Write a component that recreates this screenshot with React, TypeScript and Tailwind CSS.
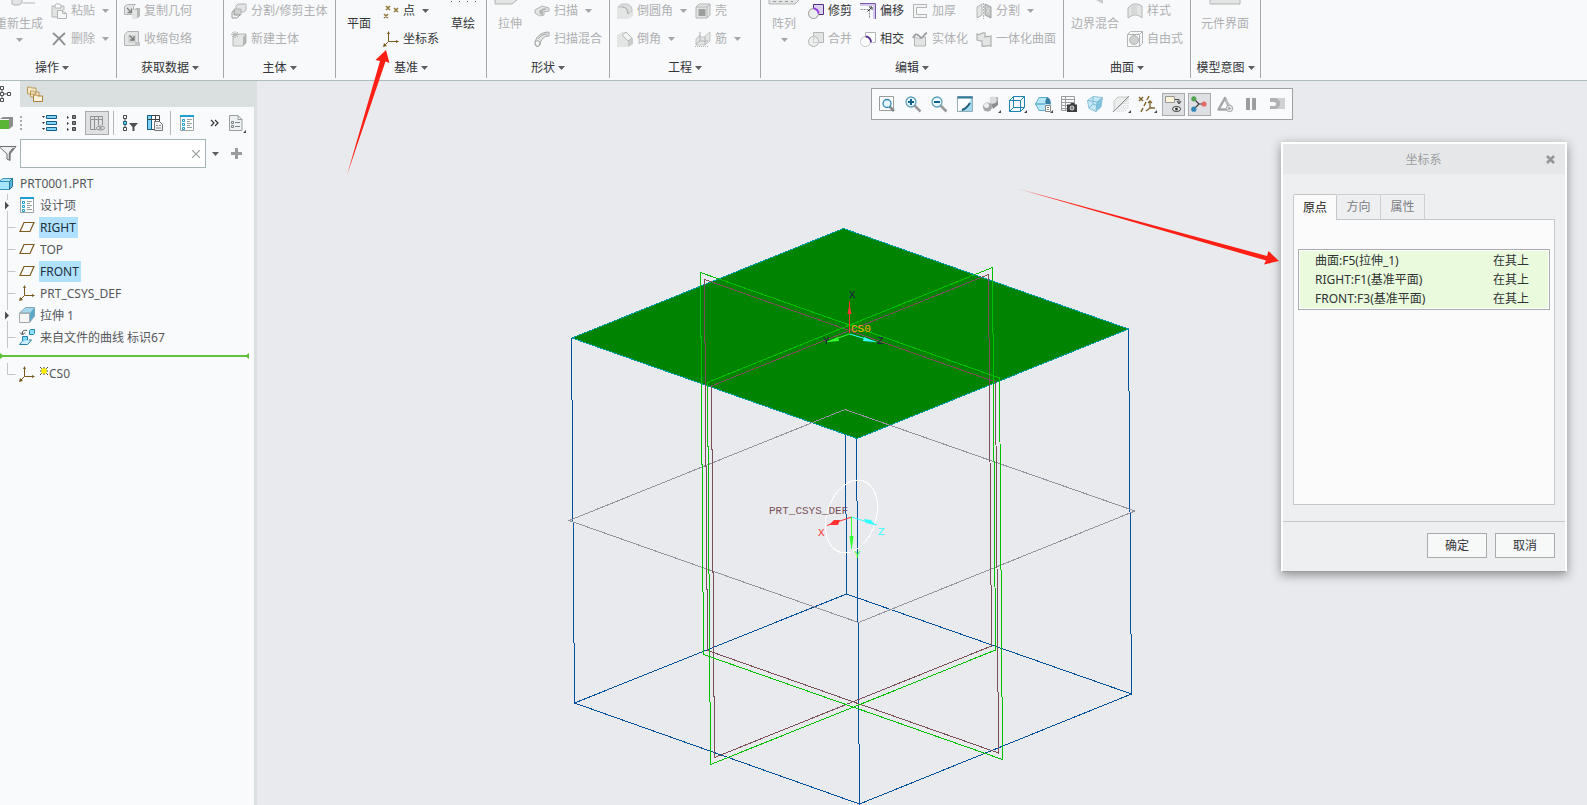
import type { ReactNode } from 'react';
import clsx from 'clsx';

const FONT = "font-['Noto_Sans','Noto_Sans_CJK_SC',sans-serif]";

const Icon = ({ children, className }: { children: ReactNode; className?: string }) => (
  <svg viewBox="0 0 16 16" className={clsx('h-4 w-4 shrink-0', className)} fill="none" aria-hidden="true">
    {children}
  </svg>
);

const Caret = ({ className = 'text-[#5c5f62]' }: { className?: string }) => (
  <svg viewBox="0 0 7 4" className={clsx('h-1 w-[7px] shrink-0', className)} aria-hidden="true">
    <path d="M0 0h7L3.5 4z" fill="currentColor" />
  </svg>
);

/* ---------- ribbon icons ---------- */

const G = '#b3b5b5';
const L = '#e3e5e5';

const ribbonIcons: Record<string, ReactNode> = {
  paste: (
    <>
      <path d="M6 14H1V3h12v4" stroke={G} fill={L} />
      <path d="M4 3l1-2h4l1 2v2H4z" fill="#fff" stroke={G} />
      <path d="M6.5 7.500h5l4 3v5h-9z" fill="#f6f7f7" stroke={G} />
      <path d="M11.500 7.500v3h4" stroke={G} />
    </>
  ),
  remove: <path d="M2 2c4 3 8 7 12 12M14 2C9 6 6 9 2 14" stroke="#8f9191" strokeWidth="2" />,
  copyGeom: (
    <>
      <path d="M.5 3.500l3-2h8l-2 2v8h-9z" fill={L} stroke={G} />
      <path d="M10 7l2-2h4v8l-2 2h-4z" fill="#b5b7b7" />
      <path d="M8 7h5v9H8z" fill={L} />
      <path d="M3 5l4 4M7.500 5.500v4h-4" stroke="#808282" strokeWidth="1.300" />
    </>
  ),
  shrink: (
    <>
      <path d="M.5 3.500l3-3h11v11l-3 3H.5z" fill={L} stroke={G} />
      <path d="M4 4h8v8H4z" fill="#d2d4d4" />
      <path d="M5.500 4.500l4 4M10 5v4H6" stroke="#777" strokeWidth="1.300" />
      <path d="M11 11h5v4h-5z" fill="#c3c5c5" />
    </>
  ),
  splitBody: (
    <>
      <path d="M5 3l2-2h8v6l-2 2H5z" fill={L} stroke={G} />
      <path d="M3 6h7v6H3z" fill="#d0d2d2" stroke={G} />
      <path d="M1 9l2-2v5h6l-3 3H1z" fill="#f0f1f1" stroke="#9b9d9d" />
    </>
  ),
  newBody: (
    <>
      <path d="M2 6l3-3h10v9l-3 3H2z" fill={L} stroke={G} />
      <path d="M12 6v9l3-3V3z" fill={G} />
      <path d="M4 0v7M0 3.500h8M1 1l6 5M7 1L1 6" stroke={G} />
    </>
  ),
  points: (
    <path
      d="M3 3l4 4M7 3L3 7M11 5l4 4M15 5l-4 4M1 11l4 4M5 11l-4 4"
      stroke="#927434"
      strokeWidth="1.500"
    />
  ),
  csys: (
    <>
      <path d="M5.500 2v8.500H15M5.500 10.500L1 15" stroke="#7c5a20" />
      <path d="M5.500 0l1.500 3H4zM16 10.500L13 9v3zM0 16l1-4 3 3z" fill="#7c5a20" />
    </>
  ),
  sweep: (
    <>
      <path d="M1 7l7-4 7 2v3l-5 1v3l-4 1-5-3z" fill={L} stroke={G} />
      <path d="M5 8l5-3 3 1-4 2v4l-3-1z" fill={G} />
    </>
  ),
  sweepBlend: (
    <>
      <path d="M1 13C1 6 7 1 15 1v4c-5 0-8 3-9 9-1 2-5 2-5-1z" fill={L} stroke="#a5a7a7" />
      <ellipse cx="3.500" cy="12.500" rx="2.300" ry="2.800" fill="#f5f5f5" stroke="#a5a7a7" />
      <path d="M4 8c2-3 5-5 9-5" stroke="#a5a7a7" />
    </>
  ),
  round: (
    <>
      <path d="M0 4l5-3h4c4 0 7 4 7 8v4l-5 3H0z" fill={L} />
      <path d="M1 4h4c4 0 6 3 6 7l4-3c0-4-2-7-6-7H5z" fill="#dcdede" stroke="#c3c5c5" />
      <path d="M5 4c4 0 6 3 6 7" stroke="#a9abab" />
    </>
  ),
  chamfer: (
    <>
      <path d="M0 4l5-3h4l7 7v5l-5 3H0z" fill={L} />
      <path d="M5 4l6 6 4-3-6-6z" fill="#f1f2f2" stroke="#b5b7b7" />
      <path d="M11 10v6l5-3V7z" fill="#c9cbcb" />
    </>
  ),
  shell: (
    <>
      <path d="M1 4l3-3h11v11l-3 3H1z" fill={L} stroke={G} />
      <path d="M3.500 6h7v7h-7z" fill="#9c9e9e" />
      <path d="M12 4v11M1 4h11l3-3" stroke={G} />
    </>
  ),
  rib: (
    <>
      <path d="M5 4l-4 4v6h9l5-4V1l-5 4v1H5z" fill={L} stroke="#c3c5c5" />
      <path d="M5 1v9l-4 3M5 10h8M10 6v8" stroke={G} />
      <path d="M0 15.500h13" stroke={G} strokeDasharray="1 1" />
    </>
  ),
  trim: (
    <>
      <path d="M5.500 1.500h10v10h-10z" fill="#ddd3ee" stroke="#54308a" />
      <circle cx="5.500" cy="10.500" r="5" fill="#eceded" stroke="#999" />
      <path d="M5.500 5.500a5 5 0 015 5" stroke="#9a3fe0" strokeWidth="2" />
    </>
  ),
  merge: (
    <>
      <path d="M5.500 1.500h10v10h-10z" fill={L} stroke={G} />
      <circle cx="5.500" cy="10.500" r="5" fill="#eceded" stroke={G} />
      <path d="M5.500 5.500v6h5" stroke="#cfd1d1" />
    </>
  ),
  offset: (
    <>
      <path d="M0 0h16v16h-3V3H0z" fill="#d6c8ea" />
      <path d="M0 .5h15.500V16" stroke="#7a5aa8" />
      <path d="M.5 6.500h9v9" stroke="#888" strokeDasharray="2 1" />
      <path d="M7.500 8.500l4-4M9 4h3v3" stroke="#333" />
    </>
  ),
  intersect: (
    <>
      <path d="M5.500 4.500v-3h10v10h-3" stroke={G} fill="#fff" />
      <circle cx="5.500" cy="10.500" r="5" fill="#fff" stroke="#c3c5c5" />
      <path d="M5.500 5.500a5.500 5.500 0 015.500 6" stroke="#54308a" strokeWidth="1.800" />
    </>
  ),
  thicken: <path d="M1.500 1.500h13v3h-10v7h10v3h-13z" stroke={G} fill="#f3f4f4" />,
  solidify: (
    <>
      <path d="M2.500 6v9h11V6c-3-2-5 4-8 1z" fill={L} stroke={G} />
      <path d="M1 7c3-6 5-3 7-1 3 3 4-4 7-4" stroke="#9c9e9e" strokeWidth="1.800" />
    </>
  ),
  divide: (
    <>
      <path d="M1 4l5-3v11l-5 3z" fill={L} stroke={G} />
      <path d="M9 1l6 3v11l-6-3z" fill="#c3c5c5" stroke="#9fa1a1" />
      <path d="M10 3l4 9M14 5l-4 6" stroke="#eee" strokeDasharray="1 1" />
      <path d="M7.500 0v16" stroke={G} strokeDasharray="2 1" />
    </>
  ),
  quilt: (
    <path d="M1 3c3 2 4-2 8-1v4c2-1 4 0 6-1v10c-3-1-5 1-9 0v-5c-2 0-3 0-5-1z" fill={L} stroke={G} strokeWidth="1.300" />
  ),
  style: (
    <>
      <path d="M1 5c4-5 9-5 14-2v12c-4-4-9-4-14 0z" fill={L} stroke={G} />
      <path d="M4 3v9l6-1V2z" fill="#d6d8d8" />
    </>
  ),
  freestyle: (
    <>
      <path d="M.5 3.500l3-3h12v12l-3 3H.5zM.5 3.500h12v12M12.500 3.500l3-3" stroke={G} />
      <circle cx="7" cy="9" r="4.500" fill="#cfd1d1" stroke={G} />
    </>
  ),
};

interface Tool {
  label: string;
  icon: string;
  caret?: boolean;
  on?: boolean;
}

const ToolColumn = ({ items }: { items: Tool[] }) => (
  <div className="flex shrink-0 flex-col items-start gap-[7px]">
    {items.map((t) => (
      <button
        key={t.label}
        type="button"
        className={clsx(
          'flex h-[21px] items-center gap-1 whitespace-nowrap',
          t.on ? 'text-[#333538]' : 'text-[#aeb0b1]',
        )}
      >
        <Icon>{ribbonIcons[t.icon]}</Icon>
        <span>{t.label}</span>
        {t.caret && <Caret className={clsx('ml-[3px]', t.on ? 'text-[#5c5f62]' : 'text-[#a3a5a6]')} />}
      </button>
    ))}
  </div>
);

const BigTool = ({ label, caret, on, stub }: { label: string; caret?: boolean; on?: boolean; stub?: ReactNode }) => (
  <button
    type="button"
    className={clsx('flex shrink-0 flex-col items-center whitespace-nowrap', on ? 'text-[#333538]' : 'text-[#aeb0b1]')}
  >
    <svg viewBox="0 0 32 6" className="h-[6px] w-8" fill="none" aria-hidden="true">
      {stub}
    </svg>
    <span className="mt-[10px] leading-4">{label}</span>
    {caret && <Caret className="mt-[6px] text-[#a3a5a6]" />}
  </button>
);

const Group = ({ title, className, children }: { title: string; className: string; children: ReactNode }) => (
  <section className={clsx('flex h-[78px] shrink-0 flex-col justify-between border-r border-[#a3a8ab]', className)}>
    <div className="flex items-start pl-[7px]">{children}</div>
    <button type="button" className="flex h-[21px] items-center justify-center gap-[3px] self-center whitespace-nowrap text-[#333538]">
      {title}
      <Caret />
    </button>
  </section>
);

const Ribbon = () => (
  <header className="flex h-[81px] shrink-0 overflow-hidden border-b border-[#aebcbd] bg-[#f8f9fb]">
    <Group title="操作" className="-ml-3 w-[129px]">
      <BigTool
        label="重新生成"
        caret
        stub={<><path d="M9 0v4l2 1h5l3-2V0" stroke={G} fill={L} /><path d="M20 3h17" stroke={G} /></>}
      />
      <div className="ml-2">
        <ToolColumn items={[{ label: '粘贴', icon: 'paste', caret: true }, { label: '删除', icon: 'remove', caret: true }]} />
      </div>
    </Group>
    <Group title="获取数据" className="w-[107px]">
      <ToolColumn items={[{ label: '复制几何', icon: 'copyGeom' }, { label: '收缩包络', icon: 'shrink' }]} />
    </Group>
    <Group title="主体" className="w-[112px]">
      <ToolColumn items={[{ label: '分割/修剪主体', icon: 'splitBody' }, { label: '新建主体', icon: 'newBody' }]} />
    </Group>
    <Group title="基准" className="w-[151px]">
      <BigTool label="平面" on />
      <div className="ml-2 w-16">
        <ToolColumn items={[{ label: '点', icon: 'points', caret: true, on: true }, { label: '坐标系', icon: 'csys', on: true }]} />
      </div>
      <BigTool label="草绘" on stub={<path d="M4 1.500h28" stroke="#555" strokeDasharray="1 7" />} />
    </Group>
    <Group title="形状" className="w-[123px]">
      <BigTool label="拉伸" stub={<path d="M1 0v4h17l5-4" stroke={G} fill={L} />} />
      <div className="ml-2">
        <ToolColumn items={[{ label: '扫描', icon: 'sweep', caret: true }, { label: '扫描混合', icon: 'sweepBlend' }]} />
      </div>
    </Group>
    <Group title="工程" className="w-[151px]">
      <ToolColumn items={[{ label: '倒圆角', icon: 'round', caret: true }, { label: '倒角', icon: 'chamfer', caret: true }]} />
      <div className="ml-2">
        <ToolColumn items={[{ label: '壳', icon: 'shell' }, { label: '筋', icon: 'rib', caret: true }]} />
      </div>
    </Group>
    <Group title="编辑" className="w-[303px]">
      <BigTool
        label="阵列"
        caret
        stub={<><path d="M1 0v4h26l4-4" stroke={G} fill={L} /><path d="M5 1.500h20" stroke="#999" strokeDasharray="3 3" /></>}
      />
      <div className="ml-2 flex gap-2">
        <ToolColumn items={[{ label: '修剪', icon: 'trim', on: true }, { label: '合并', icon: 'merge' }]} />
        <ToolColumn items={[{ label: '偏移', icon: 'offset', on: true }, { label: '相交', icon: 'intersect', on: true }]} />
        <ToolColumn items={[{ label: '加厚', icon: 'thicken' }, { label: '实体化', icon: 'solidify' }]} />
        <ToolColumn items={[{ label: '分割', icon: 'divide', caret: true }, { label: '一体化曲面', icon: 'quilt' }]} />
      </div>
    </Group>
    <Group title="曲面" className="w-[127px]">
      <BigTool label="边界混合" stub={<path d="M17 0l7 4V0z" fill="#c9cbcb" />} />
      <div className="ml-2">
        <ToolColumn items={[{ label: '样式', icon: 'style' }, { label: '自由式', icon: 'freestyle' }]} />
      </div>
    </Group>
    <Group title="模型意图" className="w-[70px]">
      <div className="ml-[3px]">
        <BigTool label="元件界面" stub={<path d="M1 0v4h30V0" stroke={G} fill={L} />} />
      </div>
    </Group>
  </header>
);

/* ---------- model tree panel ---------- */

const ListGlyph = () => (
  <>
    <path d="M1.500.5h13v15h-13z" fill="#fff" stroke="#9aa5aa" />
    <path d="M1 1h14" stroke="#1f9ed1" strokeWidth="2" />
    <path d="M3.500 4.500h2v2h-2zM3.500 8.500h2v2h-2zM3.500 12.500h2v2h-2z" stroke="#1f9ed1" />
    <path d="M8 4.500h5M8 6.500h3M8 8.500h5M8 10.500h3M8 12.500h5" stroke="#9a9fa2" />
  </>
);

const PlaneGlyph = () => <path d="M5 3.500h10l-4 9H1z" stroke="#7c5a20" strokeWidth="1.200" />;

const CsysGlyph = () => <>{ribbonIcons.csys}</>;

const ExtrudeGlyph = () => (
  <>
    <path d="M.5 6l6-5.500h9V9L11 15V6z" fill="#a5d8ec" stroke="#8aa5b0" />
    <path d="M11 6l4.500-5.500V9L11 14z" fill="#5ba9c9" />
    <path d="M.5 6.500h10v9H.5z" fill="#f7f5f5" stroke="#a5a9ac" />
  </>
);

const CurveFileGlyph = () => (
  <>
    <path d="M10.500 1.500l1-1h4v4l-1 1h-4z" fill="#8fe0fa" stroke="#2482a8" />
    <path d="M8 1.500C4 1 3 2 3.500 5M1 3.500L3.500 6 6 3.500" stroke="#444" />
    <path d="M3.500 7.500h5v5h-5z" fill="#7ed8f8" stroke="#2482a8" />
    <path d="M3 12.500l-2.500 3h8l4-4.500H10" fill="#cdefff" stroke="#2482a8" />
  </>
);

const nodes = [
  { label: '设计项', icon: <ListGlyph />, expandable: true },
  { label: 'RIGHT', icon: <PlaneGlyph />, selected: true },
  { label: 'TOP', icon: <PlaneGlyph /> },
  { label: 'FRONT', icon: <PlaneGlyph />, selected: true },
  { label: 'PRT_CSYS_DEF', icon: <CsysGlyph /> },
  { label: '拉伸 1', icon: <ExtrudeGlyph />, expandable: true },
  { label: '来自文件的曲线 标识67', icon: <CurveFileGlyph /> },
];

const Branch = ({ expandable, last }: { expandable?: boolean; last?: boolean }) => (
  <svg viewBox="0 0 19 22" className="h-[22px] w-[19px] shrink-0" fill="none" aria-hidden="true">
    <path d={expandable ? 'M7.500 0v6M7.500 17v5' : last ? 'M7.500 0v11.500h8' : 'M7.500 0v22M7.500 11.500h8'} stroke="#c3c7c9" />
    {expandable && <path d="M5 7.500v8l4-4z" fill="#4a4d50" />}
  </svg>
);

const TreePanel = () => (
  <aside className="flex w-[257px] shrink-0 flex-col border-r-[3px] border-[#dae0df] bg-[#f8fafb] text-[#55585b]">
    <div className="-mr-[3px] flex h-[26px] bg-[#dae0df]">
      <button type="button" aria-label="模型树" className="flex w-5 items-center bg-[#f8fafb]">
        <svg viewBox="0 0 12 16" className="h-4 w-3" fill="none" stroke="#4b4d4f" aria-hidden="true">
          <path d="M.5.5h3v3h-3zM.5 6.500h3v3h-3zM.5 12.500h3v3h-3zM7.500 6.500h3v3h-3zM2 4v2M2 10v2M4 8h3" />
        </svg>
      </button>
      <button type="button" aria-label="文件夹浏览器" className="ml-[7px]">
        <Icon>
          <path d="M.5 1h3l1 1H9v6H.5zM3.500 5h3l1 1H12v5H3.500z" fill="#f8e9c5" stroke="#b9975b" />
          <path d="M6.500 9h3l1 1h5v5.500h-9z" fill="#fdf3da" stroke="#a9803c" />
        </Icon>
      </button>
    </div>

    <div className="flex h-8 items-center">
      <svg viewBox="0 0 14 16" className="h-4 w-[14px]" aria-hidden="true">
        <path d="M0 4l3-2h10v9l-4 3V4z" fill="#8b8e8b" />
        <path d="M0 5h9v9H0z" fill="#59b536" />
      </svg>
      <svg viewBox="0 0 2 14" className="ml-[6px] h-[14px] w-[2px]" aria-hidden="true">
        <path d="M1 0v14" stroke="#aaa" strokeWidth="2" strokeDasharray="2 2" />
      </svg>
      <button type="button" aria-label="全部展开" className="ml-[19px]">
        <Icon>
          <path d="M5.500.5h10v3h-10zM5.500 6.500h10v3h-10zM5.500 12.500h10v3h-10z" fill="#7fd3f5" stroke="#155f85" />
          <path d="M1 1h3L2.500 3zM1 7h3L2.500 9zM1 13h3l-1.500 2z" fill="#333" />
        </Icon>
      </button>
      <button type="button" aria-label="全部折叠" className="ml-[10px]">
        <svg viewBox="0 0 9 16" className="h-4 w-[9px]" aria-hidden="true">
          <path d="M5.500.5h3v3h-3zM5.500 6.500h3v3h-3zM5.500 12.500h3v3h-3z" fill="#888" stroke="#444" />
          <path d="M0 1l2 1.500L0 4zM0 7l2 1.500L0 10zM0 13l2 1.500L0 16z" fill="#333" />
        </svg>
      </button>
      <button type="button" aria-label="树列" className="ml-[9px] flex h-6 w-6 items-center justify-center border border-[#a8abad] bg-[#dfe0e2]">
        <Icon>
          <path d="M1.500 1.500h12v3h-12zM1.500 4.500v10h4v-13M5.500 14.500h2M9.500 1.500v9M13.500 4v6" stroke="#8f9294" />
          <ellipse cx="11.500" cy="13" rx="4" ry="2" fill="#dfe0e2" stroke="#8f9294" />
          <circle cx="11.500" cy="13" r="1.200" fill="#8f9294" />
        </Icon>
      </button>
      <span className="ml-1 h-6 w-px bg-[#b3b7b9]" />
      <button type="button" aria-label="树过滤器" className="ml-[9px]">
        <Icon>
          <path d="M.5.5h3v3h-3zM.5 12.500h3v3h-3zM2 4v2M2 10v2" stroke="#444" />
          <path d="M.5 6.500h3v3h-3z" fill="#6bcaf0" stroke="#155f85" />
          <path d="M6 8h9l-3.500 4v4h-2v-4z" fill="#4c4e50" />
        </Icon>
      </button>
      <button type="button" aria-label="列设置" className="ml-2">
        <Icon>
          <path d="M.5.5h12v14H.5z" fill="#fff" stroke="#444" />
          <path d="M.5.5h4v14h-4z" fill="#7fd3f5" stroke="#155f85" />
          <path d="M1 4.500h12M8.500 1v5" stroke="#444" />
          <path d="M7.500 6.500h5l3 3v6h-8z" fill="#f4f4f4" stroke="#777" />
          <path d="M9 10.500h2M12 10.500h2M9 13h5" stroke="#888" />
        </Icon>
      </button>
      <span className="ml-[7px] h-6 w-px bg-[#b3b7b9]" />
      <button type="button" aria-label="设计项" className="ml-2">
        <Icon><ListGlyph /></Icon>
      </button>
      <button type="button" aria-label="更多" className="ml-[15px]">
        <svg viewBox="0 0 9 8" className="h-2 w-[9px]" fill="none" stroke="#333" aria-hidden="true">
          <path d="M1 1l3 3-3 3M5 1l3 3-3 3" strokeWidth="1.200" />
        </svg>
      </button>
      <button type="button" aria-label="显示" className="ml-[10px]">
        <Icon className="overflow-visible">
          <path d="M.5.5H9l4 4v11H.5z" fill="#eef1f3" stroke="#999ea1" />
          <path d="M9 .5v4h4" stroke="#999ea1" />
          <path d="M2.500 6.500h2v2h-2zM2.500 10.500h2v2h-2zM6 7.500h5M6 11.500h5" stroke="#7d8386" />
          <path d="M17 15v3h-3z" fill="#444" />
        </Icon>
      </button>
    </div>

    <div className="flex h-[29px] items-center">
      <svg viewBox="0 0 17 16" className="h-4 w-[17px] shrink-0" aria-hidden="true">
        <path d="M-1 .5h17L10 8v6.500L7 13V8z" fill="#eef0f1" stroke="#6b6e70" />
        <path d="M9.500 7l4-5M9.500 7v7" stroke="#777" strokeWidth="1.500" />
      </svg>
      <div className="ml-[3px] flex h-[29px] min-w-0 flex-1 items-center border border-[#a4b3b5] bg-white pr-[5px]">
        <input type="text" aria-label="搜索" className="h-full min-w-0 flex-1 px-1 outline-none" />
        <button type="button" aria-label="清除">
          <svg viewBox="0 0 8 8" className="h-2 w-2" stroke="#9a9d9f" aria-hidden="true">
            <path d="M0 0l8 8M8 0L0 8" strokeWidth="1.200" />
          </svg>
        </button>
      </div>
      <button type="button" aria-label="搜索选项" className="ml-[6px]"><Caret /></button>
      <button type="button" aria-label="添加" className="mr-3 ml-3">
        <svg viewBox="0 0 11 11" className="h-[11px] w-[11px]" stroke="#9a9d9f" aria-hidden="true">
          <path d="M5.500 0v11M0 5.500h11" strokeWidth="3" />
        </svg>
      </button>
    </div>

    <div className="mt-[5px] flex h-[21px] items-center gap-1">
      <Icon>
        <path d="M-1 5.500h10.500v8H-1zM-1 5.500l4-3h9.500l-3 3z" fill="#a5e6fb" stroke="#3d93b5" />
        <path d="M9.500 5.500l3-3v8l-3 3z" fill="#55b5da" stroke="#22779b" />
      </Icon>
      PRT0001.PRT
    </div>
    <ul>
      {nodes.map((n) => (
        <li key={n.label} className="flex h-[22px] items-center whitespace-nowrap">
          <Branch expandable={n.expandable} />
          <Icon>{n.icon}</Icon>
          <span className={clsx('ml-1 h-[21px] px-px leading-[21px]', n.selected && 'bg-[#b0e2ff] pr-[2px] text-[#22303a]')}>
            {n.label}
          </span>
        </li>
      ))}
    </ul>
    <svg viewBox="0 0 249 15" className="h-[15px] w-[249px]" aria-hidden="true">
      <path d="M0 7h249v2H0z" fill="#5fc13c" />
      <path d="M0 5v6l4-3zM249 5v6l-4-3z" fill="#5fc13c" />
    </svg>
    <div className="flex h-[22px] items-center">
      <Branch last />
      <Icon><CsysGlyph /></Icon>
      <svg viewBox="0 0 8 8" className="mb-[6px] ml-[5px] h-2 w-2" aria-hidden="true">
        <path d="M0 0l8 8M8 0L0 8M4 0v8M0 4h8" stroke="#444" />
        <path d="M1.500 1.500h5v5h-5z" fill="#ffee00" />
      </svg>
      <span className="ml-px">CS0</span>
    </div>
  </aside>
);

/* ---------- floating view toolbar ---------- */

const More = () => <path d="M18 14v3h-3z" fill="#444" />;

const Magnifier = ({ sign }: { sign: string }) => (
  <>
    <path d="M9.500 9.500l6 6" stroke="#999" strokeWidth="2.500" />
    <circle cx="6" cy="6" r="5" fill="#eaf7fd" stroke="#5e9fbd" strokeWidth="1.300" />
    <path d={sign} stroke="#12618a" strokeWidth="2" />
  </>
);

const viewTools: { name: string; pressed?: boolean; icon: ReactNode }[] = [
  {
    name: '重新调整',
    icon: (
      <>
        <path d="M.5.500h14v14H.5z" fill="#fdfdfd" stroke="#9a9d9f" />
        <path d="M10 10l5 5" stroke="#888" strokeWidth="2.500" />
        <circle cx="8" cy="7.500" r="4" fill="#e6f6fd" stroke="#2d89b3" strokeWidth="1.300" />
      </>
    ),
  },
  { name: '放大', icon: <Magnifier sign="M3 6h6M6 3v6" /> },
  { name: '缩小', icon: <Magnifier sign="M3 6h6" /> },
  {
    name: '重画',
    icon: (
      <>
        <path d="M.5.500h15v15H.5z" fill="#9fd7ec" stroke="#96adb7" />
        <path d="M1 2h13c-1 6-4 10-12 13H1z" fill="#fff" />
        <path d="M.500 1.500h15" stroke="#2d7797" strokeWidth="2" />
        <path d="M5 14c4-1 6-4 8-7" stroke="#1e5c78" strokeWidth="2" />
      </>
    ),
  },
  {
    name: '渲染选项',
    icon: (
      <>
        <path d="M7 1h8v8l-4 1-4-3z" fill="#b5b7b8" />
        <circle cx="10" cy="4" r="3.500" fill="#dcdddd" />
        <path d="M8 8c5 0 6-2 7-4v5l-5 4z" fill="#8d8f90" />
        <circle cx="4.500" cy="11" r="4.500" fill="#a5a7a8" />
        <circle cx="3.500" cy="9.500" r="2.500" fill="#f0f0f0" />
        <More />
      </>
    ),
  },
  {
    name: '显示样式',
    icon: (
      <>
        <path d="M.5 4.500h11v11H.5zM4.500.500h11v11h-11zM.5 4.500l4-4M11.500 4.500l4-4M11.500 15.500l4-4M.5 15.500l4-4" stroke="#1e83ad" />
        <More />
      </>
    ),
  },
  {
    name: '已保存方向',
    icon: (
      <>
        <path d="M4 1.500h8l3.500 6-3.500 7H4L.5 8z" fill="#b9e6f6" stroke="#5eadcb" />
        <path d="M.5 8H10" stroke="#3a94b8" />
        <path d="M12.500 1c3 2 3.500 4 3 7h-5c-.5-3 0-5 2-7z" fill="#347fa3" />
        <path d="M10.500 9.500h5v6h-5z" fill="#fff" stroke="#888" />
        <path d="M12 11.500h2M12 13.500h2" stroke="#888" />
        <More />
      </>
    ),
  },
  {
    name: '视图管理器',
    icon: (
      <>
        <path d="M.5.500h13v14H.5zM.5 3.500h13M.5 6.500h13M.5 9.500h8M.5 12.500h6M4.500.500v14" stroke="#9a9d9f" />
        <path d="M6 8.500h3l1-1.500h3l1 1.500h2V16H6z" fill="#3b3d3f" />
        <circle cx="11" cy="12" r="2" fill="#777" stroke="#ddd" />
      </>
    ),
  },
  {
    name: '透视图',
    icon: (
      <>
        <path d="M.5 4.500L6 .5l9.500 1L14 11l-5 4.500-7-3z" fill="#c5e9f6" stroke="#8dc3d8" />
        <path d="M.5 4.500L10 6l5.500-4.500M10 6L9 15.500M6 1v7l8 3M6 8l-4 4" stroke="#7db9d1" />
        <path d="M10 6l5-4-1 9-5 4z" fill="#7fc2dd" />
      </>
    ),
  },
  {
    name: '截面',
    icon: (
      <>
        <path d="M1 15V5l4-4h10v2z" fill="#eceded" stroke="#c6c8c8" />
        <path d="M15 3v9l-3 3H3M13 5v7l-2 1H5M11 7v4H7" stroke="#c6c8c8" strokeDasharray="1 1" />
        <path d="M0 16L16 0" stroke="#8d8f90" />
        <More />
      </>
    ),
  },
  {
    name: '基准显示过滤器',
    icon: (
      <>
        <path d="M0 1l4 4M4 1L0 5M10 0l-2 4M7 6l-2 4M4 12l-2 4" stroke="#82652c" strokeWidth="1.500" />
        <path d="M11 5v7h5M11 12l-4 3M9 7l2-2 2 2" stroke="#82652c" strokeWidth="1.300" />
        <More />
      </>
    ),
  },
  {
    name: '注释显示',
    pressed: true,
    icon: (
      <>
        <path d="M.5.500h9v6h-9z" fill="#fff5d8" stroke="#999" />
        <path d="M10 3.500h4v4M12 5l2 3 2-3" stroke="#444" />
        <ellipse cx="11.500" cy="13" rx="4" ry="2.500" fill="#fff" stroke="#333" />
        <circle cx="11.500" cy="13" r="1.500" fill="#333" />
      </>
    ),
  },
  {
    name: '旋转中心',
    pressed: true,
    icon: (
      <>
        <path d="M3 3l5 5-5 5M8 8h5" stroke="#3a3a3a" strokeWidth="1.200" />
        <circle cx="2.800" cy="2.800" r="2.600" fill="#52a353" />
        <circle cx="13" cy="8" r="2.600" fill="#e46a65" />
        <circle cx="2.800" cy="13.200" r="2.600" fill="#3386b5" />
      </>
    ),
  },
  {
    name: '仿真',
    icon: (
      <>
        <path d="M8 2L1.500 13.500H13z" stroke="#a5a7a8" strokeWidth="2.500" strokeLinejoin="round" />
        <path d="M9 4l5 8" stroke="#c3c5c5" strokeWidth="2" />
        <circle cx="12.500" cy="12.500" r="3.200" fill="#e5e6e6" stroke="#a5a7a8" />
        <path d="M11.500 11v3l2.500-1.500z" fill="#888" />
      </>
    ),
  },
  { name: '暂停', icon: <path d="M3 2h4v12H3zM9 2h4v12H9z" fill="#9b9d9e" /> },
  {
    name: '恢复',
    icon: (
      <>
        <path d="M1 2h15v11H1v-3h4c3 0 3-4 0-4H1z" fill="#d0d2d3" />
        <path d="M1 2h5c2 0 5 2 5 5 0 4-2 6-6 6H1v-3h4c3 0 3-4 0-4H1z" fill="#b0b2b3" />
      </>
    ),
  },
];

const ViewToolbar = () => (
  <div className="absolute top-[7px] right-[294px] flex h-8 items-center border border-[#9fa2a4] bg-[#f9fafc] px-[2px]">
    {viewTools.map((t) => (
      <button
        key={t.name}
        type="button"
        aria-label={t.name}
        className="flex w-[26px] justify-center"
      >
        <span
          className={clsx(
            'flex h-[23px] w-[23px] items-center justify-center border',
            t.pressed ? 'border-[#a8abad] bg-[#dfe0e3]' : 'border-transparent',
          )}
        >
          <Icon className="overflow-visible">{t.icon}</Icon>
        </span>
      </button>
    ))}
  </div>
);

/* ---------- model ---------- */

const Model = () => (
  <svg viewBox="257 81 1330 724" className="absolute inset-0 h-full w-full" fill="none" aria-hidden="true">
    <g shapeRendering="crispEdges">
      <g stroke="#00509c">
        <path d="M571.500 338L574.500 703M1128.500 329L1131.500 694M845.500 429L846.500 594M856.500 438L859.500 804" />
        <path d="M846.500 594L1131.500 694L859.500 804L574.500 703z" />
      </g>
      <path d="M843.500 228.500L1128.500 329L857 438.500L572 338z" fill="#008400" stroke="#009c9c" />
      <path d="M845 409.500L1135 511L858.500 622.500L569 520.500z" stroke="#9394a0" />
      <g stroke="#7b4f57">
        <path d="M704.500 279.500L995.500 382L998.500 753L707.500 650.500z" />
        <path d="M988.500 274.500L711.500 386L714.500 757.500L991.500 646z" />
      </g>
      <g stroke="#00c000">
        <path d="M700.500 272.500L999.500 378L1002.500 759.500L703.500 654.500z" />
        <path d="M992.500 267.500L707.500 382.500L710.500 764.500L995.500 650z" />
      </g>
      <ellipse cx="851.500" cy="516.500" rx="24.500" ry="37.500" transform="rotate(18 851.500 516.500)" stroke="#fff" />
    </g>

    <path d="M849.500 333V301" stroke="#ff3232" />
    <path d="M849.500 304l2 10h-4z" fill="#ff3232" />
    <path d="M849.500 334L827 342" stroke="#32ff32" />
    <path d="M827 342l11-5 1 4z" fill="#32ff32" />
    <path d="M849.500 334L876 342" stroke="#32ffff" />
    <path d="M875 342l-11-5-1 4z" fill="#32ffff" />

    <path d="M851.500 517L827 525.500" stroke="#ff3232" />
    <path d="M829 525l5-5 6 0-2 5z" fill="#ff3232" />
    <path d="M851.500 517L877 525" stroke="#32ffff" />
    <path d="M875 525l-4-5-7-1 2 4z" fill="#32ffff" />
    <path d="M851.500 517v32" stroke="#32ff32" />
    <path d="M849.500 536h4l-1 8-1 4-1-4z" fill="#32ff32" />

    <g className="font-['Liberation_Mono',monospace] text-[11px]">
      <text x="849" y="298" fill="#241447">X</text>
      <text x="823" y="344" fill="#241447">Y</text>
      <text x="877" y="344" fill="#241447">Z</text>
      <text x="851" y="332" fill="#ffa500">CS0</text>
      <text x="769" y="514" fill="#7b4f57">PRT_CSYS_DEF</text>
      <text x="818" y="536" fill="#ff3232">X</text>
      <text x="878" y="535" fill="#32ffff">Z</text>
      <text x="854" y="558" fill="#32ff32">Y</text>
    </g>
  </svg>
);

/* ---------- coordinate system dialog ---------- */

const references = [
  ['曲面:F5(拉伸_1)', '在其上'],
  ['RIGHT:F1(基准平面)', '在其上'],
  ['FRONT:F3(基准平面)', '在其上'],
];

const CsysDialog = () => (
  <div
    role="dialog"
    aria-label="坐标系"
    className="absolute top-[61px] right-5 w-[286px] border-2 border-b border-white border-b-[#9c9fa2] bg-[#eeeff1] shadow-[0_3px_10px_rgba(0,0,0,0.4)]"
  >
    <div className="flex h-[30px] items-center bg-[#e5e7e9] pr-[10px] pl-[18px]">
      <h2 className="flex-1 pt-px text-center text-[#9b9da0]">坐标系</h2>
      <button type="button" aria-label="关闭">
        <svg viewBox="0 0 9 9" className="h-[9px] w-[9px]" stroke="#929496" aria-hidden="true">
          <path d="M1 1l7 7M8 1L1 8" strokeWidth="2.500" />
        </svg>
      </button>
    </div>
    <div className="px-[10px] pt-5">
      <div role="tablist" className="flex">
        <button type="button" role="tab" aria-selected="true" className="relative z-10 -mb-px h-[26px] w-11 rounded-t-[2px] border border-b-0 border-[#c3c7ca] bg-[#fbfbfc] text-[#1f2123]">
          原点
        </button>
        <button type="button" role="tab" aria-selected="false" className="h-[25px] w-11 border-t border-r border-[#cdd0d3] text-[#7b7d83]">
          方向
        </button>
        <button type="button" role="tab" aria-selected="false" className="h-[25px] w-11 border-t border-r border-[#cdd0d3] text-[#7b7d83]">
          属性
        </button>
      </div>
      <div role="tabpanel" className="h-[286px] border border-[#c3c7ca] bg-[#fbfbfc] px-1 pt-[29px]">
        <div className="border border-[#a9acaf] bg-white p-px">
          <table className="w-full bg-[#eafbdd] text-[#303335]">
            <tbody>
              {references.map(([name, constraint]) => (
                <tr key={name} className="h-[19px] leading-[19px]">
                  <td className="p-0 pl-[15px]">{name}</td>
                  <td className="w-[55px] p-0">{constraint}</td>
                </tr>
              ))}
            </tbody>
          </table>
        </div>
      </div>
    </div>
    <div className="mt-4 flex justify-end gap-2 border-t border-[#c6c9cc] px-[10px] pt-[11px] pb-[13px]">
      <button type="button" className="h-[25px] w-[60px] border border-[#a9acaf] bg-[#f7f8f8] text-[#333538]">确定</button>
      <button type="button" className="h-[25px] w-[60px] border border-[#a9acaf] bg-[#f7f8f8] text-[#333538]">取消</button>
    </div>
  </div>
);

const Annotations = () => (
  <svg className="pointer-events-none absolute inset-0 h-full w-full" fill="#ff2015" aria-hidden="true">
    <path d="M347 175L380 61l-4.500-1L386 50l3.500 13-4-1.500z" />
    <path d="M1019 189L1267 256l1.500-5L1279 261l-15 3.500 2-4z" />
  </svg>
);

const App = () => (
  <div className={clsx('relative flex h-screen flex-col overflow-hidden text-xs', FONT)}>
    <Ribbon />
    <div className="flex min-h-0 flex-1">
      <TreePanel />
      <main className="relative min-w-0 flex-1 overflow-hidden bg-[#e8eaed]">
        <Model />
        <ViewToolbar />
        <CsysDialog />
      </main>
    </div>
    <Annotations />
  </div>
);

export default App;
